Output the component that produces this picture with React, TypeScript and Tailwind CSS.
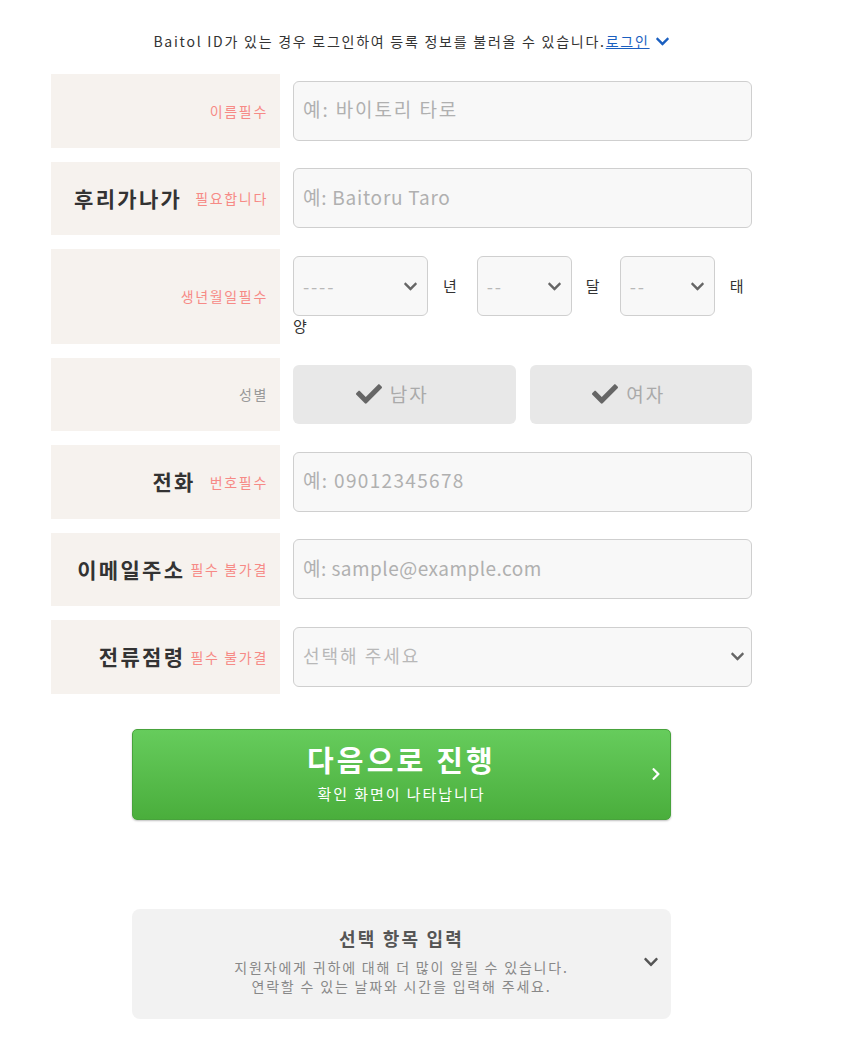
import React from "react";
import { FaCheck, FaChevronDown, FaChevronRight } from "react-icons/fa";

const font = { fontFamily: '"Noto Sans CJK KR", "Noto Sans", sans-serif' };

function Label({ big, small, gray, gap = "mr-[13px]" }: { big?: string; small: string; gray?: boolean; gap?: string }) {
  return (
    <div className="w-[229px] shrink-0 bg-[#f6f2ee] flex items-center justify-end pr-[12px]">
      {big && <span className={`text-[21px] font-bold text-[#333] ${gap} leading-none tracking-[0.11em]`}>{big}</span>}
      <span className={`text-[14px] leading-none tracking-[0.12em] ${gray ? "text-[#999]" : "text-[#f68a86]"}`}>{small}</span>
    </div>
  );
}

function Input({ ph, tr }: { ph: React.ReactNode; tr?: string }) {
  return (
    <div className={`h-[60px] w-full rounded-[6px] border border-[#cfcfcf] bg-[#f8f8f8] flex items-center pl-[9px] pb-[3px] text-[19px] text-[#b0b0b0] ${tr ?? ""}`}>
      {ph}
    </div>
  );
}

function Sel({ w, ph }: { w: string; ph: string }) {
  return (
    <div className={`${w} h-[60px] rounded-[6px] border border-[#cfcfcf] bg-[#f8f8f8] flex items-center justify-between pl-[9px] pr-[9px] text-[18px] text-[#b8b8b8] shrink-0 tracking-[0.1em]`}>
      <span>{ph}</span>
      <FaChevronDown className="text-[#666]" size={15} />
    </div>
  );
}

function Gender({ label }: { label: string }) {
  return (
    <div className="flex-1 h-[59px] rounded-[6px] bg-[#e8e8e8] flex items-center justify-center gap-[8px] pr-[24px]">
      <FaCheck className="text-[#666]" size={26} />
      <span className="text-[19px] text-[#aaa] tracking-[0.1em]">{label}</span>
    </div>
  );
}

export default function App() {
  return (
    <div className="w-[842px] min-h-[1038px] bg-white pt-[31px]" style={font}>
      <div className="ml-[51px] w-[701px]">
        <div className="flex items-center justify-center text-[14px] text-[#333] h-[20px] pl-[20px] tracking-[0.125em]">
          <span>Baitol ID가 있는 경우 로그인하여 등록 정보를 불러올 수 있습니다.</span>
          <span className="text-[#1a5fc0] underline">로그인</span>
          <FaChevronDown className="text-[#1a5fc0] ml-[5px]" size={15} />
        </div>

        <div className="mt-[23px] flex flex-col gap-[14px]">
          <div className="flex h-[73.5px]">
            <Label small="이름필수" />
            <div className="flex-1 pl-[13px] flex items-center">
              <Input ph="예: 바이토리 타로" tr="tracking-[0.1em]" />
            </div>
          </div>
          <div className="flex h-[73.5px]">
            <Label big="후리가나가" small="필요합니다" gap="mr-[13px]" />
            <div className="flex-1 pl-[13px] flex items-center">
              <Input ph="예: Baitoru Taro" tr="tracking-[0.04em]" />
            </div>
          </div>
          <div className="flex h-[94.5px]">
            <Label small="생년월일필수" />
            <div className="flex-1 pl-[13px] pt-[7px] text-[15px] text-[#333]">
              <div className="flex items-center">
                <Sel w="w-[135px]" ph="----" />
                <span className="ml-[15px] mr-[20px]">년</span>
                <Sel w="w-[95px]" ph="--" />
                <span className="ml-[14px] mr-[20px]">달</span>
                <Sel w="w-[95px]" ph="--" />
                <span className="ml-[15px]">태</span>
              </div>
              <div className="leading-[20px]">양</div>
            </div>
          </div>
          <div className="flex h-[73.5px]">
            <Label small="성별" gray />
            <div className="flex-1 pl-[13px] flex items-center gap-[14px]">
              <Gender label="남자" />
              <Gender label="여자" />
            </div>
          </div>
          <div className="flex h-[73.5px]">
            <Label big="전화" small="번호필수" gap="mr-[14px]" />
            <div className="flex-1 pl-[13px] flex items-center">
              <Input ph="예: 09012345678" tr="tracking-[0.07em]" />
            </div>
          </div>
          <div className="flex h-[73.5px]">
            <Label big="이메일주소" small="필수 불가결" gap="mr-[5px]" />
            <div className="flex-1 pl-[13px] flex items-center">
              <Input ph="예: sample@example.com" tr="tracking-[0.025em]" />
            </div>
          </div>
          <div className="flex h-[73.5px]">
            <Label big="전류점령" small="필수 불가결" gap="mr-[5px]" />
            <div className="flex-1 pl-[13px] flex items-center">
              <div className="h-[60px] w-full rounded-[6px] border border-[#cfcfcf] bg-[#f8f8f8] flex items-center justify-between pl-[9px] pr-[6px] text-[18px] text-[#b8b8b8]">
                <span className="tracking-[0.11em] pb-[3px]">선택해 주세요</span>
                <FaChevronDown className="text-[#666]" size={15} />
              </div>
            </div>
          </div>
        </div>

        <div className="mt-[35px] ml-[81px] w-[539px] h-[91px] rounded-[5px] border border-[#48a33c] bg-gradient-to-b from-[#66cc5c] to-[#4aae3c] shadow-[0_1px_2px_rgba(0,0,0,0.25)] relative flex flex-col items-center pt-[11px] text-white">
          <div className="text-[29px] font-bold leading-[36px] tracking-[0.11em]">다음으로 진행</div>
          <div className="text-[15px] leading-[20px] mt-[7px] tracking-[0.13em]">확인 화면이 나타납니다</div>
          <FaChevronRight className="absolute right-[7px] top-[37px] text-white" size={14} />
        </div>

        <div className="mt-[89px] ml-[81px] w-[539px] h-[110px] rounded-[8px] bg-[#f2f2f2] relative flex flex-col items-center pt-[17px]">
          <div className="text-[18px] font-bold text-[#555] leading-[24px] tracking-[0.12em]">선택 항목 입력</div>
          <div className="text-[14px] text-[#888] leading-[19px] mt-[8px] text-center tracking-[0.13em]">
            지원자에게 귀하에 대해 더 많이 알릴 수 있습니다.
            <br />
            연락할 수 있는 날짜와 시간을 입력해 주세요.
          </div>
          <FaChevronDown className="absolute right-[12px] top-[45px] text-[#555]" size={16} />
        </div>
      </div>
    </div>
  );
}
